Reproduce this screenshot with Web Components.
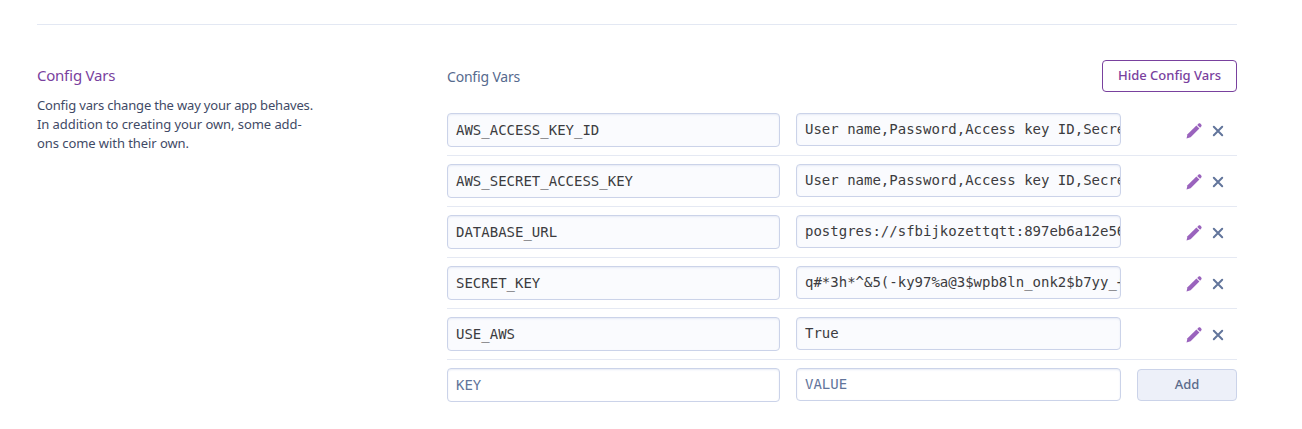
<!DOCTYPE html>
<html lang="en">
<head>
<meta charset="utf-8">
<title>Config Vars</title>
<style>
body { margin: 0; background: #fff; font-family: "Noto Sans", "Open Sans", sans-serif; }
</style>
</head>
<body>
<config-page></config-page>
<script>
function define(name, html) {
  const t = document.createElement('template');
  t.innerHTML = html.trim();
  customElements.define(name, class extends HTMLElement {
    constructor() {
      super();
      this.attachShadow({ mode: 'open' }).append(t.content.cloneNode(true));
    }
  });
}

define('section-intro', `
<style>
:host { display: block; width: 290px; padding-top: 39px; color: #3f4a66; }
h2 { margin: 0; font-size: 15px; font-weight: 400; line-height: 22px; color: #79419e; letter-spacing: -0.24px; font-feature-settings: "liga" 1; }
p { margin: 10px 0 0; font-size: 13px; line-height: 19px; white-space: nowrap; letter-spacing: -0.07px; font-feature-settings: "liga" 1; }
</style>
<h2><slot name="title"></slot></h2>
<p><slot></slot></p>`);

define('action-button', `
<style>
:host { display: block; box-sizing: border-box; height: 32px; border: 1px solid #79419e; border-radius: 4px; background: #fff; color: #79419e; font-size: 13px; font-weight: 550; line-height: 29px; text-align: center; white-space: nowrap; letter-spacing: 0; font-feature-settings: "liga" 1; }
:host([muted]) { background: #edf0f9; border-color: #cbd3e9; color: #5a6b8b; }
</style>
<slot></slot>`);

define('var-field', `
<style>
:host { display: block; box-sizing: border-box; height: 34px; border: 1px solid #cbd3e9; border-radius: 4px; padding-left: 8px; overflow: hidden; background: #fafbfe; box-shadow: inset 0 1px 2px #e6eaf5; color: #3c3c40; font: 14px/32px "DejaVu Sans Mono", monospace; white-space: nowrap; }
:host([value]) { height: 33px; line-height: 31px; }
:host([empty]) { background: #fff; color: #62759b; }
</style><slot></slot>`);

define('edit-icon', `
<style>:host, svg { display: block; width: 16px; height: 16px; }</style>
<svg viewBox="0 0 16 16" fill="#9a63bd"><path d="M.5 15.5 1.5 11.3 10.4 2.6 13.4 5.5 4.6 14.3Z"/><path d="M11.2 1.9 12.4.8C13.1.2 13.9.2 14.5.8L15.2 1.5C15.8 2.1 15.8 2.9 15.2 3.5L14.1 4.7Z"/></svg>`);

define('remove-icon', `
<style>:host, svg { display: block; width: 12px; height: 12px; }</style>
<svg viewBox="0 0 12 12" fill="none" stroke="#62759b" stroke-width="2" stroke-linecap="round"><path d="M1.8 1.8 10.2 10.2M10.2 1.8 1.8 10.2"/></svg>`);

define('config-row', `
<style>
:host { display: grid; grid-template-columns: 333px 325px 100px; column-gap: 16px; align-items: start; padding: 8px 0; border-bottom: 1px solid #e5e9f3; }
:host([last]) { border-bottom: 0; }
.actions { display: flex; justify-content: flex-end; align-items: center; gap: 10px; height: 34px; padding: 1px 13px 0 0; box-sizing: border-box; }
</style>
<slot name="key"></slot><slot name="value"></slot>
<slot name="actions"><div class="actions"><edit-icon></edit-icon><remove-icon></remove-icon></div></slot>`);

define('config-panel', `
<style>
:host { display: block; width: 790px; }
header { display: flex; justify-content: space-between; height: 45px; align-items: flex-start; }
h3 { margin: 6px 0 0; font-size: 14px; font-weight: 400; line-height: 22px; color: #566a8e; letter-spacing: -0.2px; font-feature-settings: "liga" 1; }
action-button { width: 135px; }
</style>
<header><h3><slot name="label"></slot></h3><action-button><slot name="toggle"></slot></action-button></header>
<slot></slot>`);

define('config-page', `
<style>
:host { display: block; width: 1200px; padding: 24px 0 0 37px; }
main { display: flex; justify-content: space-between; border-top: 1px solid #e3e8f3; }
config-panel { padding-top: 35px; }
.lead { letter-spacing: -0.18px; }
.add { margin-top: 1px; }
</style>
<main>
<section-intro><span slot="title">Config Vars</span><span class="lead">Config vars change the way your app behaves.</span><br>In addition to creating your own, some add-<br>ons come with their own.</section-intro>
<config-panel><span slot="label">Config Vars</span><span slot="toggle">Hide Config Vars</span>
<config-row><var-field slot="key">AWS_ACCESS_KEY_ID</var-field><var-field value slot="value">User name,Password,Access key ID,Secre</var-field></config-row>
<config-row><var-field slot="key">AWS_SECRET_ACCESS_KEY</var-field><var-field value slot="value">User name,Password,Access key ID,Secre</var-field></config-row>
<config-row><var-field slot="key">DATABASE_URL</var-field><var-field value slot="value">postgres://sfbijkozettqtt:897eb6a12e56</var-field></config-row>
<config-row><var-field slot="key">SECRET_KEY</var-field><var-field value slot="value">q#*3h*^&amp;5(-ky97%a@3$wpb8ln_onk2$b7yy_+</var-field></config-row>
<config-row><var-field slot="key">USE_AWS</var-field><var-field value slot="value">True</var-field></config-row>
<config-row last><var-field empty slot="key">KEY</var-field><var-field empty value slot="value">VALUE</var-field><action-button muted class="add" slot="actions">Add</action-button></config-row>
</config-panel>
</main>`);
</script>
</body>
</html>
